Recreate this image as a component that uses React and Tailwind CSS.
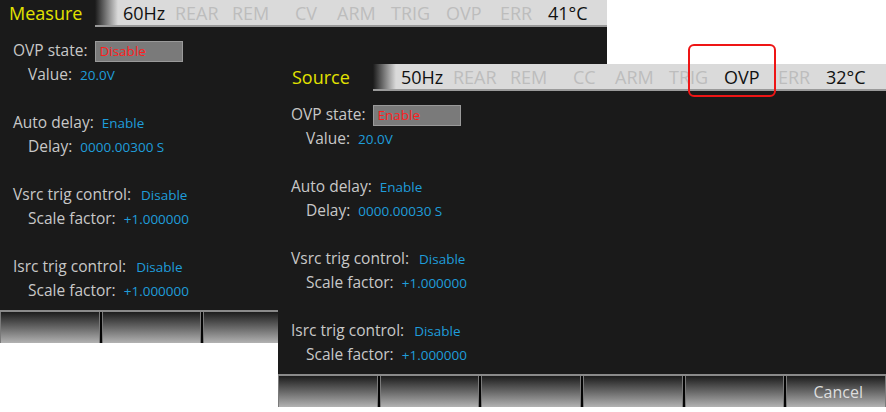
import React from "react";

const FONT = { fontFamily: '"Open Sans", "Noto Sans", sans-serif' };

function Slot({ w, active, children }) {
  return (
    <div className={`${w} shrink-0 whitespace-nowrap ${active ? "text-[#111]" : "text-[#bdbdbd]"}`}>
      {children}
    </div>
  );
}

function Row({ indent, label, children }) {
  return (
    <div className={`flex h-6 items-center ${indent ? "pl-[15px]" : ""}`}>
      <span className="whitespace-nowrap">{label}</span>
      <span className="ml-[8px] flex items-center">{children}</span>
    </div>
  );
}

function Blue({ children }) {
  return <span className="whitespace-nowrap text-[13.5px] font-medium text-[#1f9dda]">{children}</span>;
}

function Screen({ width, titlePad, title, hz, mode, ovpActive, temp, ovpState, delay, cancel }) {
  return (
    <div className={`flex h-[343px] ${width} flex-col bg-[#1a1a1a]`} style={FONT}>
      <div className="flex h-[27px] shrink-0">
        <div className={`flex w-[95px] shrink-0 items-center ${titlePad} text-[18px] text-[#e2e200]`}>{title}</div>
        <div className="flex flex-1 items-center border-b-2 border-[#9a9a9a] bg-[linear-gradient(to_right,#1a1a1a_0px,#dadada_23px,#dadada_100%)] pl-[28px] text-[18px] leading-none">
          <Slot w="w-[52px]" active>{hz}</Slot>
          <Slot w="w-[57px]">REAR</Slot>
          <Slot w="w-[63px]">REM</Slot>
          <Slot w="w-[42px]">{mode}</Slot>
          <Slot w="w-[54px]">ARM</Slot>
          <Slot w="w-[55px]">TRIG</Slot>
          <Slot w="w-[54px]" active={ovpActive}>OVP</Slot>
          <Slot w="w-[48px]">ERR</Slot>
          <Slot w="w-[50px]" active>{temp}</Slot>
        </div>
      </div>
      <div className="flex flex-1 flex-col gap-6 pl-[13px] pt-[12px] text-[15.5px] text-[#c8c8c8]">
        <div>
          <Row label="OVP state:">
            <span className="flex h-[21px] w-[88px] items-center border border-[#9a9a9a] bg-[#7a7a7a] pl-[3px] text-[13.5px] font-medium text-[#ff1e1e]">
              {ovpState}
            </span>
          </Row>
          <Row indent label="Value:">
            <Blue>20.0V</Blue>
          </Row>
        </div>
        <div>
          <Row label="Auto delay:">
            <Blue>Enable</Blue>
          </Row>
          <Row indent label="Delay:">
            <Blue>{delay}</Blue>
          </Row>
        </div>
        <div>
          <Row label="Vsrc trig control:">
            <span className="ml-[2px]"><Blue>Disable</Blue></span>
          </Row>
          <Row indent label="Scale factor:">
            <Blue>+1.000000</Blue>
          </Row>
        </div>
        <div>
          <Row label="Isrc trig control:">
            <span className="ml-[2px]"><Blue>Disable</Blue></span>
          </Row>
          <Row indent label="Scale factor:">
            <Blue>+1.000000</Blue>
          </Row>
        </div>
      </div>
      <div className="flex h-[33px] shrink-0 gap-[2px] border-t-2 border-[#8a8a8a] bg-[#050505]">
        {[0, 1, 2, 3, 4, 5].map((i) => (
          <div
            key={i}
            className="flex flex-1 items-center justify-center border-x border-[#7a7a7a] bg-[linear-gradient(to_bottom,#1c1c1c,#b2b2b2)] pl-[4px] text-[16px] text-[#dedede]"
          >
            {cancel && i === 5 ? "Cancel" : ""}
          </div>
        ))}
      </div>
    </div>
  );
}

export default function App() {
  return (
    <div className="relative h-[412px] w-[886px] overflow-hidden bg-white">
      <Screen
        width="w-[607px]"
        titlePad="pl-[9px]"
        title="Measure"
        hz="60Hz"
        mode="CV"
        temp="41°C"
        ovpState="Disable"
        delay="0000.00300 S"
      />
      <div className="absolute left-[278px] top-[64px]">
        <Screen
          width="w-[608px]"
          titlePad="pl-[14px]"
          title="Source"
          hz="50Hz"
          mode="CC"
          ovpActive
          temp="32°C"
          ovpState="Enable"
          delay="0000.00030 S"
          cancel
        />
      </div>
      <div className="absolute left-[688px] top-[44px] h-[53px] w-[88px] rounded-[6px] border-2 border-[#ee1515]" />
    </div>
  );
}
